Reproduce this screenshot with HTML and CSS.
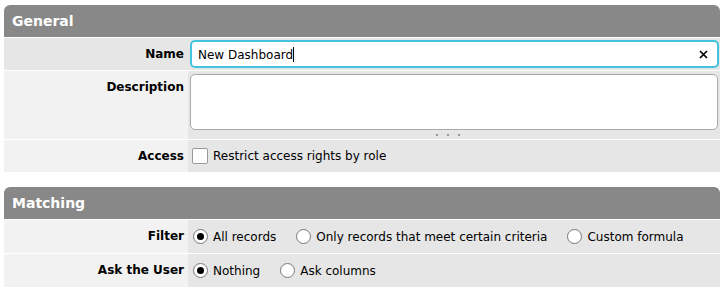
FILE: index.html
```html
<!DOCTYPE html>
<html lang="en">
<head>
  <meta charset="UTF-8">
  <meta name="viewport" content="width=device-width, initial-scale=1.0">
  <title>Dashboard Settings</title>
  <link rel="stylesheet" href="styles.css">
</head>
<body>
  <div class="section">
    <div class="section-header">General</div>
    <div class="rows">
      <div class="row row-active">
        <div class="label">Name</div>
        <div class="value">
          <div class="text-field focused">
            <span class="field-text">New Dashboard<span class="caret"></span></span>
            <svg class="clear-btn" width="9" height="9" viewBox="0 0 9 9">
              <path d="M1 1 L8 8 M8 1 L1 8" stroke="#000" stroke-width="1.7" fill="none"/>
            </svg>
          </div>
        </div>
      </div>
      <div class="row">
        <div class="label">Description</div>
        <div class="value value-stack">
          <div class="text-area"></div>
          <div class="grip"><span></span><span></span><span></span></div>
        </div>
      </div>
      <div class="row">
        <div class="label">Access</div>
        <div class="value">
          <label class="option">
            <span class="checkbox"></span>
            Restrict access rights by role
          </label>
        </div>
      </div>
    </div>
  </div>

  <div class="section">
    <div class="section-header">Matching</div>
    <div class="rows tall">
      <div class="row">
        <div class="label">Filter</div>
        <div class="value options">
          <label class="option"><span class="radio checked"></span>All records</label>
          <label class="option"><span class="radio"></span>Only records that meet certain criteria</label>
          <label class="option"><span class="radio"></span>Custom formula</label>
        </div>
      </div>
      <div class="row">
        <div class="label">Ask the User</div>
        <div class="value options">
          <label class="option"><span class="radio checked"></span>Nothing</label>
          <label class="option"><span class="radio"></span>Ask columns</label>
        </div>
      </div>
    </div>
  </div>
</body>
</html>
```

FILE: styles.css
```css
body {
  font-family: 'DejaVu Sans', Verdana, sans-serif;
  font-size: 12px;
  margin: 0;
  padding: 5px 4px 0 4px;
  background: #ffffff;
  color: #000;
  width: 716px;
}

.section {
  margin-bottom: 15px;
}

.section-header {
  height: 32px;
  line-height: 32px;
  padding-left: 8px;
  background: #888888;
  color: #ffffff;
  font-weight: bold;
  font-size: 14px;
  border-radius: 6px 6px 0 0;
}

.rows {
  display: flex;
  flex-direction: column;
  gap: 1px;
  padding-top: 1px;
}

.row {
  display: flex;
  min-height: 32px;
}

.tall .row {
  min-height: 33px;
}

.label {
  width: 180px;
  flex: none;
  padding: 0 4px 0 0;
  background: #f2f2f2;
  font-weight: bold;
  text-align: right;
  line-height: 32px;
}

.tall .label {
  line-height: 33px;
}

.row-active .label {
  background: #e6e6e6;
}

.value {
  flex: 1;
  background: #e6e6e6;
  padding: 0 0 0 2px;
  display: flex;
  align-items: center;
}

.value-stack {
  flex-direction: column;
  align-items: stretch;
  padding-top: 3px;
  padding-right: 2px;
}

.text-field {
  flex: 1;
  height: 24px;
  margin-right: 1px;
  background: #fff;
  border: 2px solid #43c3dc;
  border-radius: 5px;
  display: flex;
  align-items: center;
  justify-content: space-between;
  padding: 0 6px;
}

.caret {
  display: inline-block;
  width: 1px;
  height: 15px;
  background: #000;
  vertical-align: -3px;
}

.clear-btn {
  margin-right: 3px;
}

.text-area {
  height: 54px;
  background: #fff;
  border: 1px solid #aaaaaa;
  border-radius: 5px;
}

.grip {
  height: 9px;
  display: flex;
  justify-content: center;
  align-items: center;
  gap: 9px;
  padding-right: 12px;
}

.grip span {
  width: 2px;
  height: 2px;
  background: #999;
}

.options {
  gap: 20px;
  padding-left: 5px;
}

.option {
  display: flex;
  align-items: center;
  gap: 5px;
}

.checkbox {
  width: 14px;
  height: 14px;
  margin-left: 2px;
  background: #fff;
  border: 1px solid #999;
  border-radius: 2px;
}

.radio {
  width: 13px;
  height: 13px;
  background: #fff;
  border: 1px solid #777;
  border-radius: 50%;
  display: flex;
  align-items: center;
  justify-content: center;
}

.radio.checked::after {
  content: '';
  width: 7px;
  height: 7px;
  border-radius: 50%;
  background: #000;
}
```
